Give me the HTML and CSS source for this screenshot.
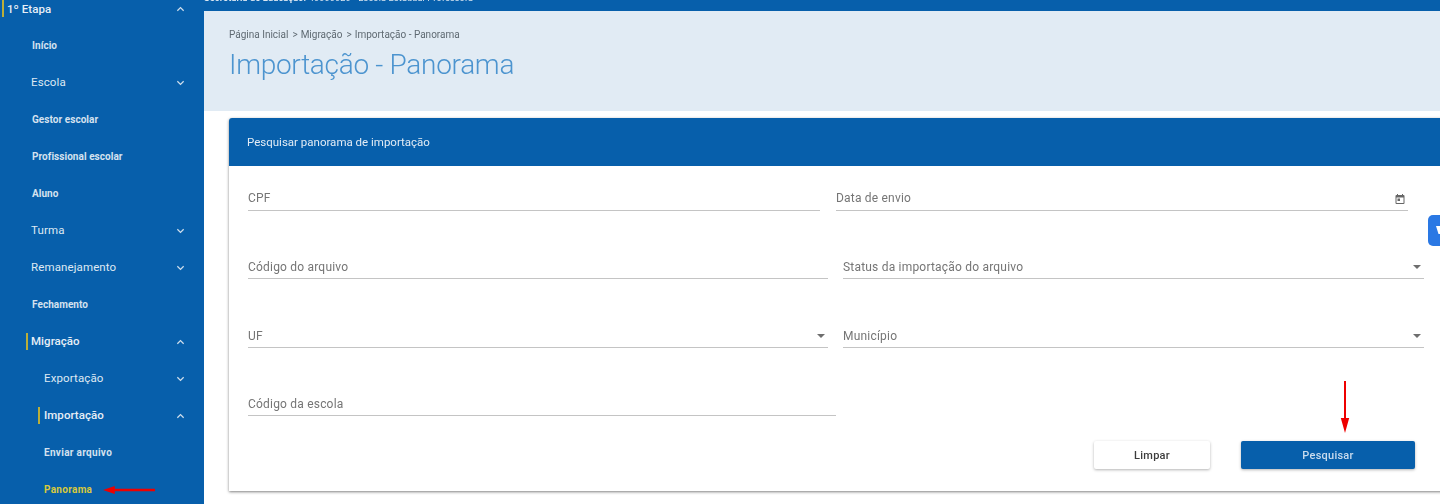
FILE: index.html
```html
<!DOCTYPE html>
<html lang="pt-BR">
<head>
<meta charset="utf-8">
<title>Importação - Panorama</title>
<link rel="stylesheet" href="styles.css">
</head>
<body>
<div class="page">
  <nav class="sidebar">
    <div class="item top"><span class="mark"></span><span class="label strong">1º Etapa</span><svg class="chev" viewBox="0 0 10 6"><path d="M1.5 5 5 1.5 8.5 5"/></svg></div>
    <div class="item lvl1"><span class="label small">Início</span></div>
    <div class="item lvl1"><span class="label">Escola</span><svg class="chev" viewBox="0 0 10 6"><path d="M1.5 1 5 4.5 8.5 1"/></svg></div>
    <div class="item lvl1"><span class="label small">Gestor escolar</span></div>
    <div class="item lvl1"><span class="label small">Profissional escolar</span></div>
    <div class="item lvl1"><span class="label small">Aluno</span></div>
    <div class="item lvl1"><span class="label">Turma</span><svg class="chev" viewBox="0 0 10 6"><path d="M1.5 1 5 4.5 8.5 1"/></svg></div>
    <div class="item lvl1"><span class="label">Remanejamento</span><svg class="chev" viewBox="0 0 10 6"><path d="M1.5 1 5 4.5 8.5 1"/></svg></div>
    <div class="item lvl1"><span class="label small">Fechamento</span></div>
    <div class="item lvl1"><span class="mark"></span><span class="label strong">Migração</span><svg class="chev" viewBox="0 0 10 6"><path d="M1.5 5 5 1.5 8.5 5"/></svg></div>
    <div class="item lvl2"><span class="label">Exportação</span><svg class="chev" viewBox="0 0 10 6"><path d="M1.5 1 5 4.5 8.5 1"/></svg></div>
    <div class="item lvl2"><span class="mark"></span><span class="label strong">Importação</span><svg class="chev" viewBox="0 0 10 6"><path d="M1.5 5 5 1.5 8.5 5"/></svg></div>
    <div class="item lvl2"><span class="label small wide">Enviar arquivo</span></div>
    <div class="item lvl2 current"><span class="label small wide">Panorama</span></div>
  </nav>
  <main class="main">
    <div class="topbar"><span class="topbar-text"><b>Secretaria de Educação:</b> 40000020 - Escola Estadual Professora</span></div>
    <header class="head">
      <div class="crumbs">Página Inicial<span class="sep">&gt;</span>Migração<span class="sep">&gt;</span>Importação - Panorama</div>
      <h1 class="title">Importação - Panorama</h1>
    </header>
    <section class="card">
      <div class="card-head">Pesquisar panorama de importação</div>
      <form class="form">
        <div class="row row-a">
          <div class="field"><span>CPF</span></div>
          <div class="field"><span>Data de envio</span>
            <svg class="cal" viewBox="0 0 24 24"><path d="M19 4h-1V2h-2v2H8V2H6v2H5a2 2 0 0 0-2 2v14a2 2 0 0 0 2 2h14a2 2 0 0 0 2-2V6a2 2 0 0 0-2-2zm0 16H5V9h14v11zM7 11h5v5H7z"/></svg>
          </div>
        </div>
        <div class="row row-b">
          <div class="field"><span>Código do arquivo</span></div>
          <div class="field"><span>Status da importação do arquivo</span><i class="caret"></i></div>
        </div>
        <div class="row row-b tall">
          <div class="field"><span>UF</span><i class="caret"></i></div>
          <div class="field"><span>Município</span><i class="caret"></i></div>
        </div>
        <div class="row row-c">
          <div class="field"><span>Código da escola</span></div>
        </div>
        <div class="actions">
          <button type="button" class="btn btn-light">Limpar</button>
          <button type="button" class="btn btn-primary">Pesquisar</button>
        </div>
      </form>
    </section>
  </main>
  <div class="widget"><svg viewBox="0 0 12 14"><path d="M1 3h10L8.5 11h-5z" fill="#fff"/></svg></div>
  <svg class="arrow arrow-left" viewBox="0 0 54 10"><path d="M0 5 12 .8V3.8H53V6.2H12V9.2z"/></svg>
  <svg class="arrow arrow-down" viewBox="0 0 10 52"><path d="M4 0H6V37H9.2L5 52 .8 37H4z"/></svg>
</div>
</body>
</html>
```

FILE: styles.css
```css
* { box-sizing: border-box; }
html, body { margin: 0; height: 504px; overflow: hidden; background: #fff; }
.page {
  position: relative;
  display: flex;
  width: 1440px;
  height: 504px;
  overflow: hidden;
  font-family: Roboto, "Liberation Sans", sans-serif;
  filter: blur(.35px);
}

/* Sidebar */
.sidebar {
  flex: 0 0 204px;
  height: 504px;
  background: #075fab;
  color: #dfe9f3;
  overflow: hidden;
}
.item {
  display: flex;
  align-items: center;
  height: 37px;
  padding-right: 19px;
  font-size: 11.5px;
  letter-spacing: .12px;
}
.item.top { margin-top: -10px; padding-left: 7px; }
.item.top .mark { margin-left: -5px; margin-right: 3px; }
.lvl1 { padding-left: 31px; }
.lvl2 { padding-left: 44px; }
.lvl2 .mark { margin-left: -6px; margin-right: 4px; }
.label { flex: 1; margin-bottom: 1px; white-space: nowrap; }
.top .label { margin-bottom: 0; }
.label.small { margin-bottom: 0; font-size: 10px; font-weight: 700; letter-spacing: .05px; color: #d5e2ef; }
.lvl1 .label.small { margin-left: 1px; }
.label.small.wide { letter-spacing: .3px; }
.label.strong { font-size: 11.5px; font-weight: 500; letter-spacing: .05px; color: #e6eef6; }
.mark {
  flex: none;
  width: 2px;
  height: 17px;
  margin-left: -5px;
  margin-right: 3px;
  background: #b9ae3a;
}
.current .label.small { color: #d9c93c; }
.chev {
  flex: none;
  width: 9px;
  height: 6px;
  fill: none;
  stroke: #cfdeec;
  stroke-width: 1.4;
}

/* Main */
.main { flex: 1; min-width: 0; }
.topbar {
  height: 11px;
  background: #075fab;
  color: #dbe7f2;
  font-size: 9px;
  letter-spacing: .2px;
  line-height: 11px;
  overflow: hidden;
  white-space: nowrap;
}
.topbar-text { display: block; margin-top: -7px; }
.head {
  height: 100px;
  padding: 18px 25px 0;
  background: #e1ebf4;
}
.crumbs { font-size: 10px; line-height: 12px; color: #5f6a72; }
.sep { margin: 0 3px 0 4px; }
.title {
  margin: 6px 0 0;
  font-size: 28px;
  line-height: 36px;
  font-weight: 300;
  letter-spacing: -.3px;
  color: #4c94cf;
}
.card {
  width: 1240px;
  height: 373px;
  margin: 7px 0 0 25px;
  border-radius: 3px 3px 0 0;
  background: #fff;
  box-shadow: 0 1px 3px rgba(0,0,0,.5);
}
.card-head {
  height: 48px;
  padding-left: 18px;
  background: #075fab;
  border-radius: 3px 3px 0 0;
  color: #e3ecf5;
  font-size: 11.5px;
  line-height: 48px;
}
.form { padding: 0 0 0 19px; }
.row { display: grid; height: 68px; }
.row:first-child { height: 45px; }
.row.tall { height: 69px; }
.row-a { grid-template-columns: 572px 572px; column-gap: 16px; }
.row-b { grid-template-columns: 580px 581px; column-gap: 15px; }
.row-c { grid-template-columns: 588px; }
.field {
  position: relative;
  display: flex;
  align-items: flex-end;
  justify-content: space-between;
  padding-bottom: 4px;
  border-bottom: 1px solid #c4c4c4;
  color: #757575;
  font-size: 12px;
  line-height: 14px;
  letter-spacing: .2px;
}
.row-a .field { padding-bottom: 5px; }
.cal { width: 12px; height: 12px; fill: #666; margin-right: 2px; }
.caret {
  width: 0;
  height: 0;
  margin: 0 3px 5px 0;
  border-left: 4px solid transparent;
  border-right: 4px solid transparent;
  border-top: 4px solid #6e6e6e;
}
.actions {
  display: flex;
  justify-content: flex-end;
  gap: 31px;
  width: 1167px;
  margin-top: 25px;
}
.btn {
  height: 28px;
  border: 0;
  border-radius: 2px;
  font-family: inherit;
  font-size: 11px;
  font-weight: 500;
  letter-spacing: .25px;
  box-shadow: 0 1px 3px rgba(0,0,0,.3);
}
.btn-light { width: 116px; background: #fff; color: #3c3c3c; }
.btn-primary { width: 174px; background: #075fab; color: #c9dcee; }

/* Overlays */
.widget {
  position: absolute;
  left: 1428px;
  top: 215px;
  width: 24px;
  height: 31px;
  padding: 8px 0 0 7px;
  border-radius: 5px;
  background: #2a78e4;
}
.widget svg { display: block; width: 12px; height: 14px; }
.arrow { position: absolute; fill: #ee0000; }
.arrow-left { left: 103px; top: 485px; width: 53px; height: 10px; }
.arrow-down { left: 1339.5px; top: 381px; width: 10px; height: 52px; }
```
